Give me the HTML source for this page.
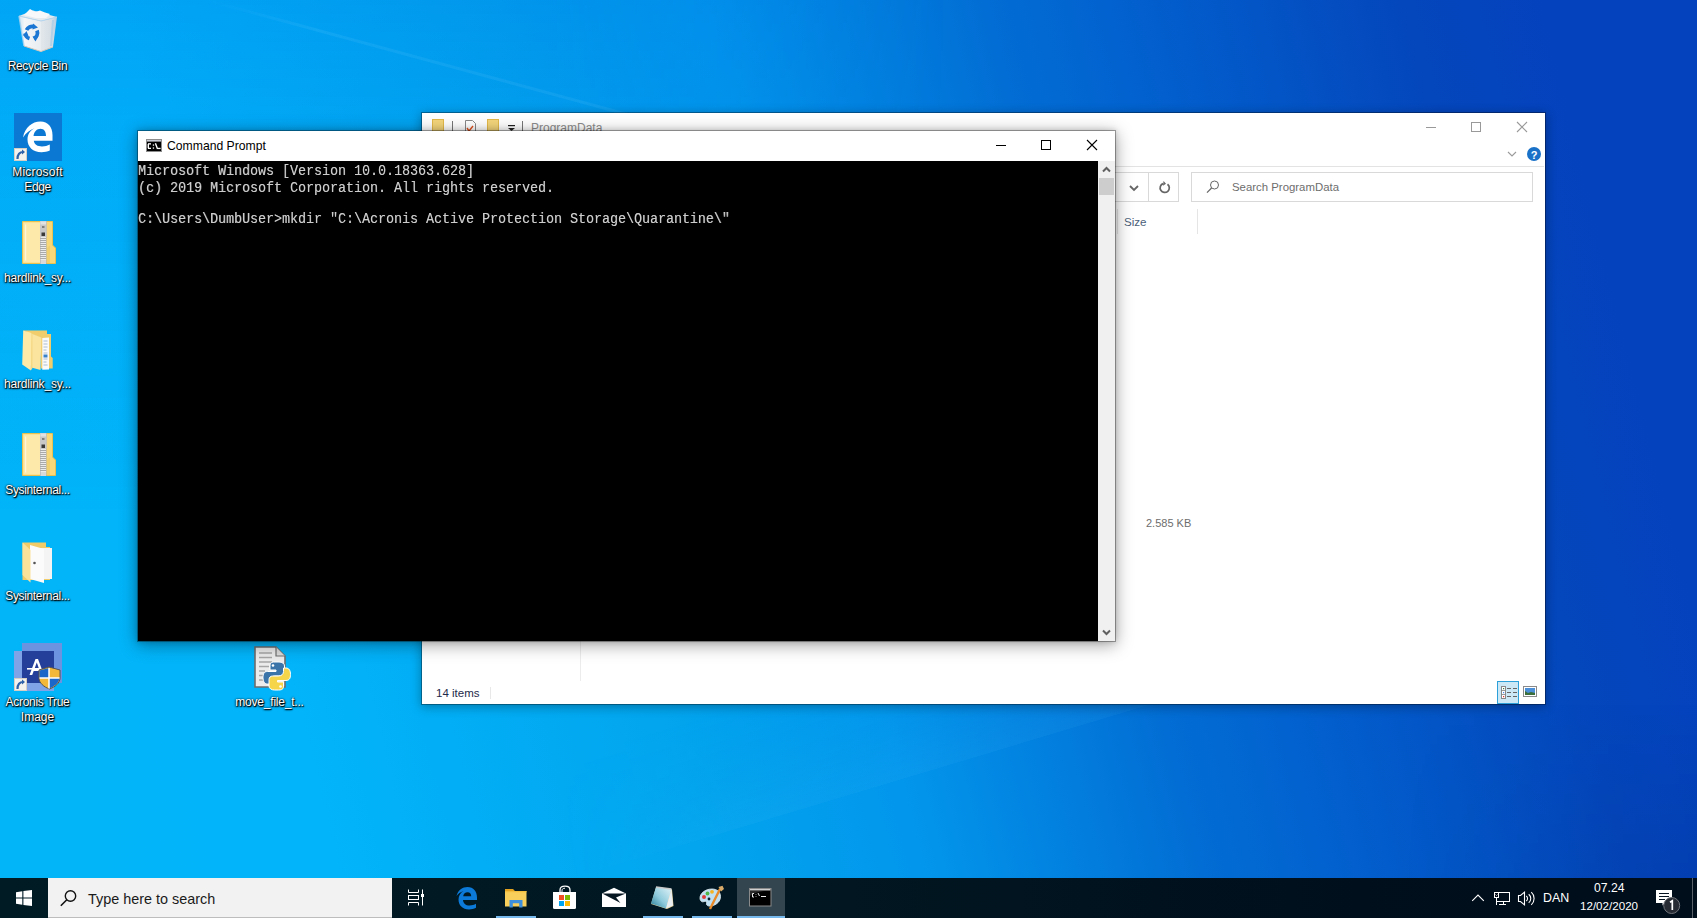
<!DOCTYPE html>
<html><head><meta charset="utf-8">
<style>
*{box-sizing:border-box;margin:0;padding:0}
html,body{width:1697px;height:918px;overflow:hidden;font-family:"Liberation Sans",sans-serif}
body{position:relative;background:#0442bd}
.abs{position:absolute}
svg{position:absolute;overflow:visible}
#wall{position:absolute;left:0;top:0;width:1697px;height:918px;
 background:linear-gradient(76deg,#02b5f8 0px,#02b4fa 340px,#02a5ee 695px,#0296ec 909px,#026dd4 1180px,#0262cf 1297px,#0446bc 1590px,#0442bd 1717px)}
.ic{position:absolute;width:75px;text-align:center;color:#fff;font-size:12px;line-height:15px;
 text-shadow:0 0 2px #000,1px 1px 1px #000,0 1px 2px rgba(0,0,0,.8)}
.tb{position:absolute;left:0;top:878px;width:1697px;height:40px;background:linear-gradient(90deg,#001b24 0,#011822 40%,#01141f 60%,#000f1c 80%,#000d1a 100%)}
.con{font-family:"Liberation Mono",monospace;color:#cccccc;text-shadow:.4px 0 0 rgba(204,204,204,.55);font-size:13.33px;line-height:14.545px;white-space:pre;transform-origin:0 0;transform:scaleY(1.1)}
.t12{font-size:12px;white-space:nowrap;position:absolute;line-height:14px}
</style></head>
<body>
<div id="wall"></div>

<!-- wallpaper overlays -->
<div class="abs" style="left:0;top:0;width:1697px;height:918px;background:linear-gradient(180deg,rgba(0,60,225,.12) 0,rgba(0,60,225,.07) 120px,rgba(0,60,225,0) 520px);-webkit-mask-image:linear-gradient(90deg,#000 0,#000 550px,transparent 950px)"></div>
<div class="abs" style="left:0;top:0;width:1697px;height:918px;background:linear-gradient(180deg,rgba(0,0,40,0) 700px,rgba(0,0,40,.07) 878px);-webkit-mask-image:linear-gradient(90deg,transparent 1400px,#000 1697px)"></div>
<div class="abs" style="left:208px;top:-1px;width:1100px;height:3px;transform-origin:0 50%;transform:rotate(15.2deg);background:linear-gradient(90deg,rgba(120,210,255,.0),rgba(120,210,255,.12) 10%,rgba(120,210,255,.1) 60%,rgba(120,210,255,0));filter:blur(.7px)"></div>
<div class="abs" style="left:573px;top:758px;width:700px;height:120px;transform-origin:0 100%;transform:rotate(-16.7deg);background:linear-gradient(0deg,rgba(90,200,255,.08),rgba(90,200,255,.03) 40%,rgba(90,200,255,0) 100%);-webkit-mask-image:linear-gradient(90deg,transparent,#000 25%,#000 80%,transparent)"></div>

<!-- desktop icons -->
<svg style="left:16px;top:6px" width="44" height="48" viewBox="0 0 44 48">
 <defs><linearGradient id="rbf" x1="0" y1="0" x2="1" y2="0"><stop offset="0" stop-color="#cfe3f2"/><stop offset=".25" stop-color="#f4f6f8"/><stop offset="1" stop-color="#e9edf0"/></linearGradient>
 <linearGradient id="rbr" x1="0" y1="0" x2="1" y2="0"><stop offset="0" stop-color="#e2e7eb"/><stop offset=".7" stop-color="#d4dde4"/><stop offset="1" stop-color="#a9cbe6"/></linearGradient></defs>
 <path d="M3 10L25 15L25 45.5L8 40Z" fill="url(#rbf)"/>
 <path d="M25 15L41 11L37 41L25 45.5Z" fill="url(#rbr)"/>
 <path d="M3 10L17 4.5L41 11L25 15Z" fill="#e6ebef"/>
 <path d="M8 9L14 3L19 6L24 4.5L29 6.5L34 8L30 12L20 12Z" fill="#f7f8f9"/>
 <path d="M3 10L25 15L41 11" fill="none" stroke="#b9d5ec" stroke-width="1"/>
 <path d="M8 40L25 45.5L37 41" fill="none" stroke="#d8c7b8" stroke-width="1"/>
 <g fill="none" stroke="#1a76d2" stroke-width="3.8">
  <path d="M10.5 24A6.5 6.5 0 0 1 18 20.5"/>
  <path d="M21 24.5A6.5 6.5 0 0 1 18 32.5"/>
  <path d="M13.5 32.5A6.5 6.5 0 0 1 9 27.5"/>
 </g>
 <g fill="#1a76d2"><path d="M17 17.5L22 21.5L16.5 23.5Z"/><path d="M22.5 30L19.5 35.5L16.5 30.5Z"/><path d="M7 29.5L10.5 25L12.5 30Z"/></g>
 <path d="M3 10L8 40" stroke="#a9d3f0" stroke-width="1.5" opacity=".8"/>
 <path d="M37 14L35 40" stroke="#a6cbe8" stroke-width="2" opacity=".7"/>
</svg>
<div class="ic" style="left:0;top:59px;letter-spacing:-.35px">Recycle Bin</div>

<svg style="left:14px;top:113px" width="48" height="48" viewBox="0 0 48 48">
 <rect width="48" height="48" fill="#0b78d4"/>
 <path fill="#fff" fill-rule="evenodd" d="M9 24.5C11 14.5 18 8.6 26.5 8.6C34 8.6 38.5 14 38.5 22L38.5 27.8L19.8 27.8C20.3 31.5 23.5 33.5 28 33.5C31 33.5 33.5 32.8 35.8 31.6L35.8 37.5C33.5 38.6 30.5 39.2 27.5 39.2C19 39.2 13.5 34 13.5 26.5C13.5 21.5 16 17.5 20.5 15.3C16 16.8 12 20 9 24.5ZM19.5 23C20 18.5 23 15.7 26.5 15.7C30 15.7 32 18.5 32 23Z"/>
 <rect x="0.5" y="35.5" width="12" height="12" fill="#f4f2ef" stroke="#d8cfc4"/>
 <path d="M3.5 46C3.5 41 6 39 9.5 39" fill="none" stroke="#2f62a8" stroke-width="2.2"/>
 <path d="M8 36.5L11 39L8 41.5Z" fill="#2f62a8"/>
</svg>
<div class="ic" style="left:0;top:165px"><span style="letter-spacing:.2px">Microsoft</span><br><span style="letter-spacing:-.4px">Edge</span></div>

<svg style="left:22px;top:221px" width="35" height="44" viewBox="0 0 35 44">
 <path d="M0.5 0.5H30.5V24L33.5 27V42.5H0.5Z" fill="#f8d878" stroke="#e9c150"/>
 <rect x="1.5" y="1.5" width="17" height="40" fill="#fde9aa"/>
 <rect x="3" y="3.5" width="1.2" height="36" fill="#fff6d8"/>
 <path d="M25 27L28 24.5V42H25Z" fill="#f3d06e"/>
 <rect x="18" y="0" width="6.5" height="43" fill="#a9a9a9"/>
 <path d="M18.5 16.5h5.5M18.5 18.5h5.5M18.5 20.5h5.5M18.5 22.5h5.5M18.5 24.5h5.5M18.5 26.5h5.5M18.5 28.5h5.5M18.5 30.5h5.5M18.5 32.5h5.5M18.5 34.5h5.5M18.5 36.5h5.5M18.5 38.5h5.5" stroke="#ececec" stroke-width="1"/>
 <rect x="18" y="0" width="6.5" height="16" fill="#c8c8c8"/>
 <rect x="18.5" y="0.5" width="5.5" height="3" fill="#e2e2e2"/>
 <rect x="20" y="5" width="2.5" height="2" fill="#808080"/>
 <rect x="19.5" y="11.5" width="3.5" height="3.5" fill="#3a3a3a"/>
 <rect x="18.5" y="39" width="5.5" height="4" fill="#d9d9d9"/>
</svg>
<div class="ic" style="left:0;top:271px;letter-spacing:-.2px">hardlink_sy...</div>

<svg style="left:22px;top:330px" width="32" height="42" viewBox="0 0 32 42">
 <path d="M1 0.5H25V4H29V26.5L30.7 28V38.5H19V8Z" fill="#f2cd6c"/>
 <path d="M20.3 8L27 7.5V39.5L20.3 39.7Z" fill="#fafafa"/>
 <path d="M21.5 11h4M21.5 14h4M21.5 17h4M21.5 20h3M21.5 23h4M21.5 29h4M21.5 32h3M21.5 35h4" stroke="#aabdd3" stroke-width="1"/>
 <rect x="21.5" y="24.5" width="4" height="3" fill="#3a82c8"/>
 <path d="M5 1.8L19.4 7.4L18.5 40L9.4 37.5Z" fill="#fbe49d"/>
 <path d="M1.2 0.5L9.4 3L8.9 40.6L0.2 34.5Z" fill="#fde9a8"/>
 <path d="M9.4 3L10.5 4V38L8.9 40.6Z" fill="#f4d885"/>
</svg>
<div class="ic" style="left:0;top:377px;letter-spacing:-.2px">hardlink_sy...</div>

<svg style="left:22px;top:433px" width="35" height="44" viewBox="0 0 35 44">
 <path d="M0.5 0.5H30.5V24L33.5 27V42.5H0.5Z" fill="#f8d878" stroke="#e9c150"/>
 <rect x="1.5" y="1.5" width="17" height="40" fill="#fde9aa"/>
 <rect x="3" y="3.5" width="1.2" height="36" fill="#fff6d8"/>
 <path d="M25 27L28 24.5V42H25Z" fill="#f3d06e"/>
 <rect x="18" y="0" width="6.5" height="43" fill="#a9a9a9"/>
 <path d="M18.5 16.5h5.5M18.5 18.5h5.5M18.5 20.5h5.5M18.5 22.5h5.5M18.5 24.5h5.5M18.5 26.5h5.5M18.5 28.5h5.5M18.5 30.5h5.5M18.5 32.5h5.5M18.5 34.5h5.5M18.5 36.5h5.5M18.5 38.5h5.5" stroke="#ececec" stroke-width="1"/>
 <rect x="18" y="0" width="6.5" height="16" fill="#c8c8c8"/>
 <rect x="18.5" y="0.5" width="5.5" height="3" fill="#e2e2e2"/>
 <rect x="20" y="5" width="2.5" height="2" fill="#808080"/>
 <rect x="19.5" y="11.5" width="3.5" height="3.5" fill="#3a3a3a"/>
 <rect x="18.5" y="39" width="5.5" height="4" fill="#d9d9d9"/>
</svg>
<div class="ic" style="left:0;top:483px;letter-spacing:-.35px">Sysinternal...</div>

<svg style="left:22px;top:542px" width="31" height="42" viewBox="0 0 31 42">
 <path d="M0.5 0.5H24V5H28V38H0.5Z" fill="#f1cb68"/>
 <path d="M16 6L30 6V37H16Z" fill="#f4f4f4"/>
 <path d="M8 3L22 7V41L8 37Z" fill="#fbfbfb"/>
 <circle cx="12.5" cy="21" r="1.3" fill="#555"/>
 <path d="M0.5 0.5L8.5 8V40.5L0.5 33Z" fill="#fbe29b"/>
</svg>
<div class="ic" style="left:0;top:589px;letter-spacing:-.35px">Sysinternal...</div>

<svg style="left:14px;top:643px" width="48" height="48" viewBox="0 0 48 48">
 <rect x="8" y="0" width="40" height="40" fill="#6b93e0"/>
 <rect x="0" y="8" width="40" height="40" fill="#7fa3e6"/>
 <rect x="8" y="8" width="32" height="32" fill="#243f9a"/>
 <path fill="#fff" fill-rule="evenodd" d="M15.5 32L21.5 16H24L30 32H27.3L25.8 28H19.7L18.2 32ZM20.6 25.6H24.9L22.8 19.6Z"/>
 <rect x="13" y="25" width="14" height="1.6" fill="#fff"/>
 <path d="M35 24L46 27V35C46 40 41 44 35.5 46C30 44 25 40 25 35V27Z" fill="#f3b73a" stroke="#555" stroke-width="1"/>
 <path d="M25.5 27.5L35 25V35H25.5ZM35 35H45.5C45 40 40.5 43.5 35 45.5Z" fill="#1a67c9"/>
 <path d="M35 25V45.5M25.5 35H45.5" stroke="#fff" stroke-width="1.5"/>
 <rect x="0.5" y="35.5" width="12" height="12" fill="#f4f2ef" stroke="#d8cfc4"/>
 <path d="M3.5 46C3.5 41 6 39 9.5 39" fill="none" stroke="#2f62a8" stroke-width="2.2"/>
 <path d="M8 36.5L11 39L8 41.5Z" fill="#2f62a8"/>
</svg>
<div class="ic" style="left:0;top:695px"><span style="letter-spacing:-.28px">Acronis True</span><br>Image</div>

<svg style="left:254px;top:646px" width="40" height="46" viewBox="0 0 40 46">
 <path d="M1 1H22L31 10V41H1Z" fill="#ececec" stroke="#6e6e6e" stroke-width="1.6"/>
 <path d="M22 1V10H31" fill="#dcdcdc" stroke="#6e6e6e" stroke-width="1.2"/>
 <path d="M5 7h13M5 11.5h13M5 16h13M5 20.5h10M5 25h6M5 29.5h6M5 34h6" stroke="#a6a6a6" stroke-width="1.5"/>
 <path d="M21 16C16 16 16 18 16 21V24H22V25.5H13.5C10 25.5 9 28 9 31.5C9 35.5 10.5 38 13.5 38H16V34.5C16 32 18 30 21 30H27C29 30 30.5 28.5 30.5 26.5V20C30.5 17.5 28 16 25 16Z" fill="#3b74a8" stroke="#fff" stroke-width="1"/>
 <path d="M24.5 44C29.5 44 29.5 42 29.5 39V36H23.5V34.5H32C35.5 34.5 36.5 32 36.5 28.5C36.5 24.5 35 22 32 22H29.5V25.5C29.5 28 27.5 30 24.5 30H18.5C16.5 30 15 31.5 15 33.5V40C15 42.5 17.5 44 20.5 44Z" fill="#f7d54a" stroke="#fff" stroke-width="1"/>
 <circle cx="19" cy="19.5" r="1.3" fill="#fff"/>
 <circle cx="26.5" cy="40.5" r="1.3" fill="#fff"/>
</svg>
<div class="ic" style="left:232px;top:695px;letter-spacing:-.22px">move_file_t...</div>


<!-- explorer -->
<div class="abs" id="exp" style="left:421px;top:112px;width:1125px;height:593px;background:#fff;background-clip:padding-box;border:1px solid rgba(0,0,0,.32);box-shadow:0 2px 10px rgba(0,0,0,.3)">
 <!-- title bar qat -->
 <svg style="left:10px;top:6px" width="110" height="20" viewBox="0 0 110 20">
  <rect x="0.5" y="0.5" width="11" height="12" fill="#f3d57a" stroke="#e3b949"/>
  <rect x="20" y="2" width="1" height="12" fill="#777"/>
  <path d="M33.5 1.5h7l3 3v10h-10z" fill="#fff" stroke="#888"/>
  <path d="M35 9l2 3 4-5" fill="none" stroke="#e0521f" stroke-width="1.4"/>
  <rect x="55.5" y="0.5" width="11" height="12" fill="#f3d57a" stroke="#e3b949"/>
  <rect x="76" y="6" width="7" height="1.2" fill="#222"/>
  <path d="M76 9h7l-3.5 3z" fill="#222"/>
  <rect x="90" y="2" width="1" height="12" fill="#777"/>
 </svg>
 <div class="t12" style="left:109px;top:8px;color:#8c8c8c">ProgramData</div>
 <!-- caption buttons -->
 <svg style="left:1000px;top:5px" width="120" height="20" viewBox="0 0 120 20">
  <rect x="4" y="9" width="10" height="1" fill="#999"/>
  <rect x="49.5" y="4.5" width="9" height="9" fill="none" stroke="#999"/>
  <path d="M95 4l10 10M105 4l-10 10" stroke="#999" stroke-width="1.1"/>
 </svg>
 <!-- ribbon chevron + help -->
 <svg style="left:1085px;top:33px" width="40" height="20" viewBox="0 0 40 20">
  <path d="M1 6l4 4 4-4" fill="none" stroke="#9a9a9a" stroke-width="1.1"/>
  <circle cx="27" cy="8" r="7" fill="#1a72c8"/>
  <text x="27" y="12.5" font-size="11" font-weight="bold" fill="#fff" text-anchor="middle" font-family="Liberation Sans">?</text>
 </svg>
 <div class="abs" style="left:1px;top:53px;width:1121px;height:1px;background:#e3e3e3"></div>
 <!-- address bar -->
 <div class="abs" style="left:580px;top:59px;width:177px;height:30px;border:1px solid #d9d9d9;border-left:none"></div>
 <div class="abs" style="left:726px;top:59px;width:1px;height:30px;background:#d9d9d9"></div>
 <svg style="left:705px;top:72px" width="14" height="10" viewBox="0 0 14 10">
  <path d="M3 1l4 4 4-4" fill="none" stroke="#666" stroke-width="1.8"/>
 </svg>
 <svg style="left:736px;top:68px" width="14" height="14" viewBox="0 0 14 14">
  <path d="M9.5 3.2A4.6 4.6 0 1 1 5 2.6" fill="none" stroke="#666" stroke-width="1.7"/>
  <path d="M5.5 0l2.5 2.8-3 2z" fill="#666"/>
 </svg>
 <div class="abs" style="left:769px;top:59px;width:342px;height:30px;border:1px solid #d9d9d9"></div>
 <svg style="left:784px;top:67px" width="14" height="14" viewBox="0 0 14 14">
  <circle cx="8.5" cy="5" r="4" fill="none" stroke="#666" stroke-width="1"/>
  <path d="M5.6 8L1 12.6" stroke="#666" stroke-width="1.2"/>
 </svg>
 <div class="t12" style="left:810px;top:67px;color:#6d6d6d;font-size:11.4px">Search ProgramData</div>
 <!-- column headers -->
 <div class="abs" style="left:695px;top:96px;width:1px;height:25px;background:#e5e5e5"></div>
 <div class="abs" style="left:775px;top:96px;width:1px;height:25px;background:#e5e5e5"></div>
 <div class="t12" style="left:702px;top:102px;color:#4c607a;font-size:11.6px">Size</div>
 <div class="t12" style="left:724px;top:403px;color:#6d6d6d;font-size:11px">2.585 KB</div>
 <!-- nav pane divider -->
 <div class="abs" style="left:158px;top:120px;width:1px;height:448px;background:#ececec"></div>
 <!-- status bar -->
 <div class="t12" style="left:14px;top:573px;color:#1e2a4a;font-size:11.5px">14 items</div>
 <div class="abs" style="left:68px;top:574px;width:1px;height:12px;background:#e8e8e8"></div>
 <div class="abs" style="left:1075px;top:568px;width:22px;height:23px;background:#cce8f7;border:1px solid #2d9fd9"></div>
 <svg style="left:1075px;top:568px" width="48" height="23" viewBox="0 0 48 23">
  <rect x="4.5" y="5.5" width="4" height="12" fill="#fff" stroke="#888"/>
  <path d="M5 9.5H8M5 13.5H8" stroke="#999" stroke-width="1"/>
  <rect x="6" y="7" width="1.2" height="1.2" fill="#3a7a4a"/><rect x="6" y="11" width="1.2" height="1.2" fill="#4a8ae8"/><rect x="6" y="15" width="1.2" height="1.2" fill="#e03030"/>
  <path d="M10 7.5h4M16 7.5h4M10 11.5h4M16 11.5h4M10 15.5h4M16 15.5h4" stroke="#666" stroke-width="1"/>
  <rect x="26.5" y="5.5" width="13" height="10" fill="#fff" stroke="#8a8a8a"/>
  <rect x="28" y="7" width="10" height="7" fill="#4a8fd8"/>
  <path d="M28 10l3 2 3-1 4 1v2H28z" fill="#3b6e3a"/>
 </svg>
</div>

<!-- cmd -->
<div class="abs" id="cmd" style="left:137px;top:130px;width:979px;height:512px;background:#fff;background-clip:padding-box;border:1px solid rgba(0,0,0,.32);box-shadow:0 3px 16px rgba(0,0,0,.36),0 0 5px rgba(0,0,0,.15)">
 <svg style="left:8px;top:8px" width="16" height="13" viewBox="0 0 16 13">
  <rect x="0" y="0" width="16" height="13" fill="#8c8c8c"/>
  <rect x="1" y="1" width="14" height="11" fill="#000"/>
  <rect x="1" y="1" width="14" height="1.6" fill="#c9ccd4"/>
  <rect x="2" y="4.2" width="3" height="1.3" fill="#fff"/><rect x="1.6" y="5" width="1.4" height="4.3" fill="#fff"/><rect x="2" y="8.7" width="3" height="1.3" fill="#fff"/>
  <rect x="6.8" y="5.4" width="1.3" height="1.3" fill="#fff"/><rect x="6.8" y="8.4" width="1.3" height="1.3" fill="#fff"/>
  <path d="M9.4 4.3L11.6 9.9" stroke="#fff" stroke-width="1.4"/>
  <rect x="12" y="8.8" width="2.6" height="1.3" fill="#fff"/>
 </svg>
 <div class="t12" style="left:29px;top:8px;color:#000;font-size:12.2px">Command Prompt</div>
 <svg style="left:850px;top:4px" width="120" height="20" viewBox="0 0 120 20">
  <rect x="8" y="10" width="10" height="1" fill="#000"/>
  <rect x="53.5" y="5.5" width="9" height="9" fill="none" stroke="#000"/>
  <path d="M99 5l10 10M109 5l-10 10" stroke="#000" stroke-width="1.1"/>
 </svg>
 <div class="abs" style="left:0;top:30px;width:960px;height:480px;background:#000;overflow:hidden">
  <div class="con abs" style="left:0;top:3px">Microsoft Windows [Version 10.0.18363.628]
(c) 2019 Microsoft Corporation. All rights reserved.

C:\Users\DumbUser>mkdir "C:\Acronis Active Protection Storage\Quarantine\"</div>
 </div>
 <div class="abs" style="left:960px;top:30px;width:17px;height:480px;background:#f0f0f0"></div>
 <div class="abs" style="left:961px;top:47px;width:15px;height:17px;background:#cdcdcd"></div>
 <svg style="left:960px;top:30px" width="17" height="480" viewBox="0 0 17 480">
  <path d="M5 10.5l3.5-3.5 3.5 3.5" fill="none" stroke="#606060" stroke-width="2"/>
  <path d="M5 469.5l3.5 3.5 3.5-3.5" fill="none" stroke="#606060" stroke-width="2"/>
 </svg>
</div>

<!-- taskbar -->
<div class="tb"></div>

<!-- start -->
<svg style="left:15px;top:889px" width="18" height="18" viewBox="0 0 18 18">
 <path d="M1 3.2L7.3 2.3V8.4H1Z M8.4 2.1L17 0.9V8.4H8.4Z M1 9.6H7.3V15.7L1 14.8Z M8.4 9.6H17V17.1L8.4 15.9Z" fill="#fff"/>
</svg>
<!-- search box -->
<div class="abs" style="left:48px;top:878px;width:344px;height:40px;background:#f2f2f2;border-bottom:1px solid #bdbdbd"></div>
<svg style="left:60px;top:890px" width="17" height="17" viewBox="0 0 17 17">
 <circle cx="10.5" cy="6" r="5.2" fill="none" stroke="#111" stroke-width="1.4"/>
 <path d="M6.8 9.7L0.8 15.7" stroke="#111" stroke-width="1.6"/>
</svg>
<div class="abs" style="left:88px;top:891px;font-size:14.4px;line-height:17px;color:#1a1a1a;white-space:nowrap">Type here to search</div>
<!-- task view -->
<svg style="left:407px;top:889px" width="19" height="17" viewBox="0 0 19 17">
 <path d="M1.5 0.5V3.5H11.5V0.5M1.5 16.5V13.5H11.5V16.5" fill="none" stroke="#fff" stroke-width="1"/>
 <rect x="1.5" y="6.5" width="10" height="4" fill="none" stroke="#fff" stroke-width="1"/>
 <path d="M15.5 0.5V16.5" stroke="#fff" stroke-width="1"/>
 <rect x="14" y="5" width="3" height="3" fill="#fff"/>
</svg>
<!-- edge -->
<svg style="left:456px;top:886px" width="22" height="24" viewBox="0 0 22 24">
 <path fill="#0b7ad8" fill-rule="evenodd" d="M0.5 10C2 4 6.5 1 11.5 1C17.5 1 21 5.5 21 11.5V14H7C7.3 17.5 9.7 19.5 13.5 19.5C16 19.5 18.3 18.8 20 17.8V21.8C18 23 15.5 23.4 13 23.4C6.5 23.4 2.5 19.3 2.5 13.5C2.5 9.7 4.5 6.7 7.5 5C4.5 6 2 7.8 0.5 10ZM7.2 10.3C7.5 7.8 9.3 6.3 11.6 6.3C13.8 6.3 15.2 7.8 15.2 10.3Z"/>
</svg>
<!-- explorer -->
<svg style="left:504px;top:888px" width="24" height="20" viewBox="0 0 24 20">
 <path d="M1 1.5H9L10.5 3H22.5V18.5H1Z" fill="#f8cf5a"/>
 <path d="M1 1H9L10.8 3H1Z" fill="#e3a321"/>
 <rect x="1" y="3" width="21.5" height="1.2" fill="#f2bf3e"/>
 <path d="M5.5 19.5V12H18.5V19.5H15.2V15.2H8.8V19.5Z" fill="#3d8fdb"/>
</svg>
<div class="abs" style="left:496px;top:916px;width:40px;height:2px;background:#76b9ed"></div>
<!-- store -->
<svg style="left:552px;top:885px" width="25" height="25" viewBox="0 0 25 25">
 <path d="M8 7.5V5C8 2.3 9.8 1.2 13 1.2C16.2 1.2 18 2.3 18 5V7.5" fill="none" stroke="#fff" stroke-width="1.3"/>
 <path d="M10 7.5V5.8C10 4 11 3.2 13 3.2" fill="none" stroke="#fff" stroke-width="1"/>
 <path d="M1 7H24V22.5Q24 24 22.5 24H2.5Q1 24 1 22.5Z" fill="#fff"/>
 <rect x="7" y="10" width="5" height="5" fill="#f25022"/><rect x="13" y="10" width="5" height="5" fill="#7fba00"/>
 <rect x="7" y="16" width="5" height="5" fill="#00a4ef"/><rect x="13" y="16" width="5" height="5" fill="#ffb900"/>
</svg>
<!-- mail -->
<svg style="left:601px;top:887px" width="26" height="21" viewBox="0 0 26 21">
 <path d="M1 6.5L13 0.8L25 6.5V20H1Z" fill="#fff"/>
 <path d="M1.2 6.5H24.8L15 10.5L19.5 16Z" fill="#061722"/>
</svg>
<!-- notepad -->
<svg style="left:650px;top:886px" width="25" height="24" viewBox="0 0 25 24">
 <defs><linearGradient id="np" x1="1" y1="0" x2="0" y2="1"><stop offset="0" stop-color="#e3f4f9"/><stop offset=".55" stop-color="#8fcbdc"/><stop offset="1" stop-color="#237a93"/></linearGradient></defs>
 <path d="M6 1.5L22 3.5L23.5 20L17 23L1 18Z" fill="#e8d29a"/>
 <path d="M6 1L21.5 3L16 22.5L1 17.5Z" fill="url(#np)"/>
 <path d="M21.5 3L23 19.5L16 22.5Z" fill="#e9eef0"/>
 <path d="M6 1L21.5 3" stroke="#c9c9c9" stroke-width="1.4"/>
</svg>
<div class="abs" style="left:643px;top:916px;width:40px;height:2px;background:#76b9ed"></div>
<!-- paint -->
<svg style="left:699px;top:885px" width="27" height="26" viewBox="0 0 27 26">
 <path d="M13 4C6 4 1 8.5 1 13C1 16 3 17.5 5 16.5C7 15.5 8 17 7.5 18.5C7 20 9 21.5 12 21C18 20 21.5 16 21.5 11.5C21.5 7 18 4 13 4Z" fill="#bfe0f2" stroke="#e8f4fa" stroke-width=".8"/>
 <circle cx="5" cy="12" r="2" fill="#e23b3b"/><circle cx="8.5" cy="8.5" r="1.9" fill="#4fb74a"/><circle cx="13" cy="6.8" r="1.9" fill="#f5b324"/>
 <circle cx="10" cy="14" r="1.4" fill="#0b2230"/>
 <path d="M21 4L11 24" stroke="#e88a2a" stroke-width="2.4"/>
 <path d="M19.5 2L23.5 0.8L25 4L22 6.5Z" fill="#d8ab6a"/>
</svg>
<div class="abs" style="left:692px;top:916px;width:40px;height:2px;background:#76b9ed"></div>
<!-- cmd -->
<div class="abs" style="left:737px;top:878px;width:48px;height:40px;background:#33454f"></div>
<svg style="left:749px;top:888px" width="23" height="19" viewBox="0 0 23 19">
 <rect x="0.5" y="0.5" width="21.5" height="17.5" fill="#000" stroke="#8a8a8a"/>
 <rect x="1" y="1" width="20.5" height="1.6" fill="#cfcfcf"/>
 <path d="M1 8Q6 4 15 3H21.5V2.6H1Z" fill="#3a3a3a" opacity=".7"/>
 <path d="M5 5.5H3.5V9H5M7 6V6.6M7 8V8.6M9 5L10.5 8M12 8.5H17" stroke="#e8e8e8" stroke-width="1" fill="none"/>
</svg>
<div class="abs" style="left:737px;top:916px;width:48px;height:2px;background:#76b9ed"></div>
<!-- tray -->
<svg style="left:1471px;top:893px" width="15" height="10" viewBox="0 0 15 10">
 <path d="M1.2 7.8L7 2L12.8 7.8" fill="none" stroke="#fff" stroke-width="1.1"/>
</svg>
<svg style="left:1493px;top:891px" width="19" height="16" viewBox="0 0 19 16">
 <rect x="3.5" y="1.5" width="13" height="9" fill="none" stroke="#fff" stroke-width="1"/>
 <path d="M3.5 10.5V14M10.5 10.5V13.5M6 13.5H13" fill="none" stroke="#fff" stroke-width="1"/>
 <rect x="1.5" y="1.5" width="4" height="5" fill="#000915" stroke="#fff" stroke-width="1"/>
 <path d="M2.5 3.5L3.5 4.5L4.5 3.5" fill="none" stroke="#fff" stroke-width=".8"/>
</svg>
<svg style="left:1516px;top:890px" width="20" height="17" viewBox="0 0 20 17">
 <path d="M2.5 5.5H4.5L8.5 2.2V14.8L4.5 11.5H2.5Z" fill="none" stroke="#fff" stroke-width="1.1"/>
 <path d="M10.2 6A3 3 0 0 1 10.2 11M12.7 4.2A5.5 5.5 0 0 1 12.7 12.8M15.3 2.2A8.5 8.5 0 0 1 15.3 14.8" fill="none" stroke="#fff" stroke-width="1.1"/>
</svg>
<div class="abs" style="left:1543px;top:891px;font-size:12.4px;line-height:14px;color:#fff;white-space:nowrap">DAN</div>
<div class="abs" style="left:1594px;top:881px;font-size:12.2px;line-height:14px;color:#fff;white-space:nowrap">07.24</div>
<div class="abs" style="left:1580px;top:899px;font-size:11.6px;line-height:14px;color:#fff;white-space:nowrap">12/02/2020</div>
<svg style="left:1655px;top:889px" width="27" height="26" viewBox="0 0 27 26">
 <path d="M1 1H17V14H10L7.5 16.5V14H1Z" fill="#fff"/>
 <path d="M4 4.5H14M4 7.5H14M4 10.5H10" stroke="#061422" stroke-width="1"/>
 <circle cx="16.7" cy="16.5" r="8" fill="#262b33" stroke="#70737a" stroke-width="1"/>
 <path d="M15 13.2L17.3 11.8V21" fill="none" stroke="#fff" stroke-width="1.7"/>
</svg>
<div class="abs" style="left:1692px;top:878px;width:1px;height:40px;background:#5a6068"></div>

</body></html>
